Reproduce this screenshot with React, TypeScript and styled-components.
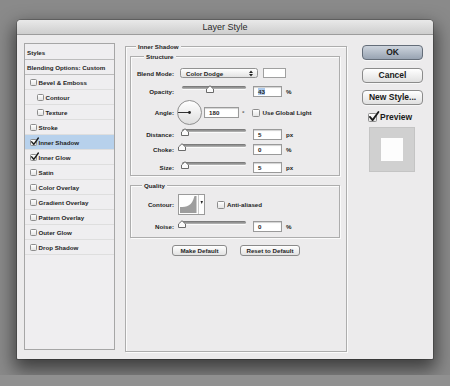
import React from 'react';
import styled, { createGlobalStyle, css } from 'styled-components';

const GlobalStyle = createGlobalStyle`
  html, body { margin: 0; padding: 0; background: #8e8e8e; }
  body { width: 450px; height: 386px; overflow: hidden; font-family: "Liberation Sans", Arial, sans-serif; }
  * { box-sizing: border-box; }
`;

const small = css`
  font-family: "Liberation Sans", Arial, sans-serif;
  font-weight: 700;
  font-size: 6.2px;
  color: #1e1e1e;
  white-space: nowrap;
`;

const Stage = styled.div`
  width: 450px;
  height: 375px;
  overflow: hidden;
  padding: 20px 0 0 17px;
  background: #8a8a8a;
`;

const Floor = styled.div`
  height: 11px;
  background: #909090;
`;

const Window = styled.div`
  width: 416px;
  height: 339px;
  background: #ecebec;
  border-radius: 4px 4px 1px 1px;
  box-shadow: 0 0 0 1px rgba(0, 0, 0, 0.2), 0 8px 18px 3px rgba(0, 0, 0, 0.55);
  display: flex;
  flex-direction: column;
`;

const TitleBar = styled.div`
  flex: none;
  height: 15px;
  background: linear-gradient(#e9e9e9, #cecece);
  border-bottom: 1px solid #9c9c9c;
  border-radius: 4px 4px 0 0;
  font-family: "Liberation Sans", Arial, sans-serif;
  font-size: 9px;
  line-height: 15px;
  text-align: center;
  color: #2a2a2a;
`;

const Body = styled.div`
  flex: 1;
  display: flex;
  padding: 8px 10px 0 7px;
`;

/* ---------- left style list ---------- */
const StyleList = styled.div`
  flex: none;
  width: 91px;
  height: 307px;
  padding-top: 1px;
  border: 1px solid #a6a6a6;
  background: #efeef0;
  display: flex;
  flex-direction: column;
`;

const StyleRow = styled.div<{ $indent: number; $selected?: boolean; $strong?: boolean }>`
  ${small};
  height: 15px;
  flex: none;
  display: flex;
  align-items: center;
  gap: 1.5px;
  padding-left: ${(p) => p.$indent}px;
  border-bottom: 1px solid ${(p) => (p.$strong ? '#bcbcbc' : '#dedede')};
  background: ${(p) => (p.$selected ? '#b7d1ec' : 'transparent')};
`;

/* ---------- checkbox ---------- */
const Box = styled.span<{ $size: number }>`
  position: relative;
  flex: none;
  display: inline-block;
  width: ${(p) => p.$size}px;
  height: ${(p) => p.$size}px;
  border: 1px solid #8d8d8d;
  border-radius: 1.5px;
  background: linear-gradient(#ffffff, #e4e4e4);
`;

const Tick = styled.svg`
  position: absolute;
  left: 0;
  top: -2px;
  overflow: visible;
`;

const CheckBox: React.FC<{ size?: number; checked?: boolean }> = ({ size = 7, checked }) => (
  <Box $size={size}>
    {checked && (
      <Tick width={size} height={size} viewBox="0 0 10 10">
        <path d="M1 5.5 L4 9 L10.5 0" fill="none" stroke="#1b1b1b" strokeWidth="2" strokeLinecap="round" strokeLinejoin="round" />
      </Tick>
    )}
  </Box>
);

/* ---------- group frames ---------- */
const Group = styled.div<{ $w: number; $h: number; $ml?: number; $mt?: number }>`
  flex: none;
  width: ${(p) => p.$w}px;
  height: ${(p) => p.$h}px;
  margin-left: ${(p) => p.$ml ?? 0}px;
  margin-top: ${(p) => p.$mt ?? 0}px;
  border: 1px solid #adadad;
  box-shadow: inset 1px 1px 0 #fbfbfb, 1px 1px 0 #fbfbfb;
  display: flex;
  flex-direction: column;
`;

const Legend = styled.div<{ $x: number }>`
  ${small};
  align-self: flex-start;
  height: 7px;
  line-height: 7px;
  margin: -4px 0 0 ${(p) => p.$x}px;
  padding: 0 2px;
  background: #ecebec;
`;

const Row = styled.div<{ $h: number; $mt: number }>`
  flex: none;
  display: flex;
  align-items: center;
  height: ${(p) => p.$h}px;
  margin-top: ${(p) => p.$mt}px;
`;

const Label = styled.span`
  ${small};
  flex: none;
  width: 43px;
  text-align: right;
`;

const Text = styled.span<{ $ml?: number }>`
  ${small};
  margin-left: ${(p) => p.$ml ?? 0}px;
`;

const Field = styled.div<{ $w: number; $ml: number }>`
  ${small};
  flex: none;
  width: ${(p) => p.$w}px;
  height: 11px;
  margin-left: ${(p) => p.$ml}px;
  padding-left: 4px;
  line-height: 10px;
  background: #ffffff;
  border: 1px solid #9a9a9a;
  box-shadow: inset 0 1px 1px rgba(0, 0, 0, 0.18);
`;

const Selected = styled.span`
  background: #aecbed;
`;

const Select = styled.div`
  ${small};
  flex: none;
  width: 78px;
  height: 10px;
  margin-left: 6px;
  padding: 0 4px 0 5px;
  display: flex;
  align-items: center;
  justify-content: space-between;
  border: 1px solid #929292;
  border-radius: 2.5px;
  background: linear-gradient(#ffffff, #e3e3e3);
`;

const Swatch = styled.div`
  flex: none;
  width: 23px;
  height: 10px;
  margin-left: 5px;
  border: 1px solid #a0a0a0;
  background: #ffffff;
`;

const SliderWrap = styled.div`
  position: relative;
  flex: none;
  width: 64px;
  height: 12px;
  margin-left: 8px;
`;

const Track = styled.div`
  margin-top: 1px;
  height: 3px;
  border-radius: 2px;
  background: linear-gradient(#6f6f6f, #b9b9b9);
  box-shadow: 0 1px 0 #fafafa;
`;

const Thumb = styled.svg`
  position: absolute;
  top: 0;
`;

const Slider: React.FC<{ value: number }> = ({ value }) => (
  <SliderWrap>
    <Track />
    <Thumb width="8" height="8" viewBox="0 0 8 8" style={{ left: (value / 100) * 64 - 4 }}>
      <path d="M0.5 7.5 L0.5 4 L4 0.7 L7.5 4 L7.5 7.5 Z" fill="#fbfbfb" stroke="#6a6a6a" strokeWidth="1" />
    </Thumb>
  </SliderWrap>
);

const Dial = styled.svg`
  flex: none;
  margin-left: 3px;
`;

const ContourThumb = styled.svg`
  flex: none;
  margin-left: 4px;
`;

const Spacer = styled.span<{ $ml: number }>`
  flex: none;
  display: inline-flex;
  margin-left: ${(p) => p.$ml}px;
`;

const ButtonRow = styled.div`
  display: flex;
  justify-content: center;
  gap: 13px;
  margin-top: 7px;
`;

const SmallButton = styled.div<{ $w: number }>`
  ${small};
  width: ${(p) => p.$w}px;
  height: 11px;
  line-height: 9px;
  text-align: center;
  border: 1px solid #8a8a8a;
  border-radius: 3px;
  background: linear-gradient(#ffffff, #e2e2e2);
`;

/* ---------- right column ---------- */
const Side = styled.div`
  flex: none;
  width: 61px;
  margin: 2px 0 0 15px;
  display: flex;
  flex-direction: column;
`;

const Button = styled.div<{ $primary?: boolean; $mt: number }>`
  font-family: "Liberation Sans", Arial, sans-serif;
  font-weight: 700;
  font-size: 8.5px;
  color: #1a1a1a;
  height: 15px;
  line-height: 13px;
  margin-top: ${(p) => p.$mt}px;
  text-align: center;
  border-radius: 4px;
  border: 1px solid ${(p) => (p.$primary ? '#646d79' : '#8b8b8b')};
  background: ${(p) => (p.$primary ? 'linear-gradient(#cdd4dd, #98a3b2)' : 'linear-gradient(#ffffff, #e0e0e0)')};
  box-shadow: 0 1px 0 rgba(255, 255, 255, 0.6);
`;

const PreviewRow = styled.div`
  display: flex;
  align-items: center;
  gap: 3px;
  height: 10px;
  margin: 7px 0 0 6px;
  font-family: "Liberation Sans", Arial, sans-serif;
  font-weight: 700;
  font-size: 8.5px;
  color: #1a1a1a;
`;

const PreviewSwatch = styled.div`
  width: 46px;
  height: 45px;
  margin: 5px 0 0 7px;
  background: #d0d0d0;
  border: 1px solid #c4c4c4;
  display: flex;
  align-items: center;
  justify-content: center;
`;

const PreviewInner = styled.div`
  width: 22px;
  height: 23px;
  background: #fdfdfd;
`;

const MiddleCol = styled.div`
  flex: none;
  margin-left: 10px;
`;

const styleItems: { label: string; indent: number; box?: boolean; checked?: boolean; selected?: boolean; strong?: boolean }[] = [
  { label: 'Styles', indent: 2, strong: true },
  { label: 'Blending Options: Custom', indent: 2, strong: true },
  { label: 'Bevel & Emboss', indent: 5, box: true },
  { label: 'Contour', indent: 12, box: true },
  { label: 'Texture', indent: 12, box: true },
  { label: 'Stroke', indent: 5, box: true },
  { label: 'Inner Shadow', indent: 5, box: true, checked: true, selected: true },
  { label: 'Inner Glow', indent: 5, box: true, checked: true },
  { label: 'Satin', indent: 5, box: true },
  { label: 'Color Overlay', indent: 5, box: true },
  { label: 'Gradient Overlay', indent: 5, box: true },
  { label: 'Pattern Overlay', indent: 5, box: true },
  { label: 'Outer Glow', indent: 5, box: true },
  { label: 'Drop Shadow', indent: 5, box: true },
];

const SliderRow: React.FC<{ label: string; value: number; unit: string; mt: number; selected?: boolean }> = ({ label, value, unit, mt, selected }) => (
  <Row $h={12} $mt={mt}>
    <Label>{label}</Label>
    <Slider value={value} />
    <Field $w={29} $ml={7}>{selected ? <Selected>{value}</Selected> : value}</Field>
    <Text $ml={4}>{unit}</Text>
  </Row>
);

export default function App() {
  return (
    <>
      <GlobalStyle />
      <Stage>
        <Window>
          <TitleBar>Layer Style</TitleBar>
          <Body>
            <StyleList>
              {styleItems.map((it) => (
                <StyleRow key={it.label} $indent={it.indent} $selected={it.selected} $strong={it.strong}>
                  {it.box && <CheckBox checked={it.checked} />}
                  <span>{it.label}</span>
                </StyleRow>
              ))}
            </StyleList>

            <MiddleCol>
              <Group $w={222} $h={306} $mt={3}>
                <Legend $x={10}>Inner Shadow</Legend>
                <Group $w={210} $h={120} $ml={4} $mt={6}>
                  <Legend $x={13}>Structure</Legend>
                  <Row $h={12} $mt={7}>
                    <Label>Blend Mode:</Label>
                    <Select>
                      <span>Color Dodge</span>
                      <svg width="4" height="7" viewBox="0 0 4 7">
                        <path d="M0 3 L2 0.5 L4 3 Z M0 4 L2 6.5 L4 4 Z" fill="#222" />
                      </svg>
                    </Select>
                    <Swatch />
                  </Row>
                  <SliderRow label="Opacity:" value={43} unit="%" mt={6} selected />
                  <Row $h={25} $mt={3}>
                    <Label>Angle:</Label>
                    <Dial width="25" height="25" viewBox="0 0 25 25">
                      <defs>
                        <linearGradient id="dialg" x1="0" y1="0" x2="0" y2="1">
                          <stop offset="0" stopColor="#ffffff" />
                          <stop offset="1" stopColor="#dedede" />
                        </linearGradient>
                      </defs>
                      <circle cx="12.5" cy="12.5" r="12" fill="url(#dialg)" stroke="#8f8f8f" strokeWidth="1" />
                      <line x1="12.5" y1="12.5" x2="1" y2="12.5" stroke="#333" strokeWidth="1" />
                      <circle cx="12.5" cy="12.5" r="1.4" fill="#222" />
                    </Dial>
                    <Field $w={35} $ml={2}>180</Field>
                    <Text $ml={3}>°</Text>
                    <Spacer $ml={8}>
                      <CheckBox size={8} />
                    </Spacer>
                    <Text $ml={2}>Use Global Light</Text>
                  </Row>
                  <SliderRow label="Distance:" value={5} unit="px" mt={3} />
                  <SliderRow label="Choke:" value={0} unit="%" mt={3} />
                  <SliderRow label="Size:" value={5} unit="px" mt={6} />
                </Group>

                <Group $w={210} $h={53} $ml={4} $mt={9}>
                  <Legend $x={11}>Quality</Legend>
                  <Row $h={21} $mt={5}>
                    <Label>Contour:</Label>
                    <ContourThumb width="27" height="21" viewBox="0 0 27 21">
                      <rect x="0.5" y="0.5" width="26" height="20" fill="#fdfdfd" stroke="#9a9a9a" />
                      <path d="M2 19 L2 13 C9 13 14 12 16.5 2 L18.5 2 L18.5 19 Z" fill="#9d9d9d" />
                      <line x1="20.5" y1="1" x2="20.5" y2="20" stroke="#c8c8c8" />
                      <path d="M22.5 7 L25 7 L23.75 10 Z" fill="#222" />
                    </ContourThumb>
                    <Spacer $ml={12}>
                      <CheckBox size={8} />
                    </Spacer>
                    <Text $ml={2}>Anti-aliased</Text>
                  </Row>
                  <SliderRow label="Noise:" value={0} unit="%" mt={5} />
                </Group>

                <ButtonRow>
                  <SmallButton $w={55}>Make Default</SmallButton>
                  <SmallButton $w={60}>Reset to Default</SmallButton>
                </ButtonRow>
              </Group>
            </MiddleCol>

            <Side>
              <Button $primary $mt={0}>OK</Button>
              <Button $mt={8}>Cancel</Button>
              <Button $mt={7}>New Style...</Button>
              <PreviewRow>
                <CheckBox size={9} checked />
                <span>Preview</span>
              </PreviewRow>
              <PreviewSwatch>
                <PreviewInner />
              </PreviewSwatch>
            </Side>
          </Body>
        </Window>
      </Stage>
      <Floor />
    </>
  );
}
